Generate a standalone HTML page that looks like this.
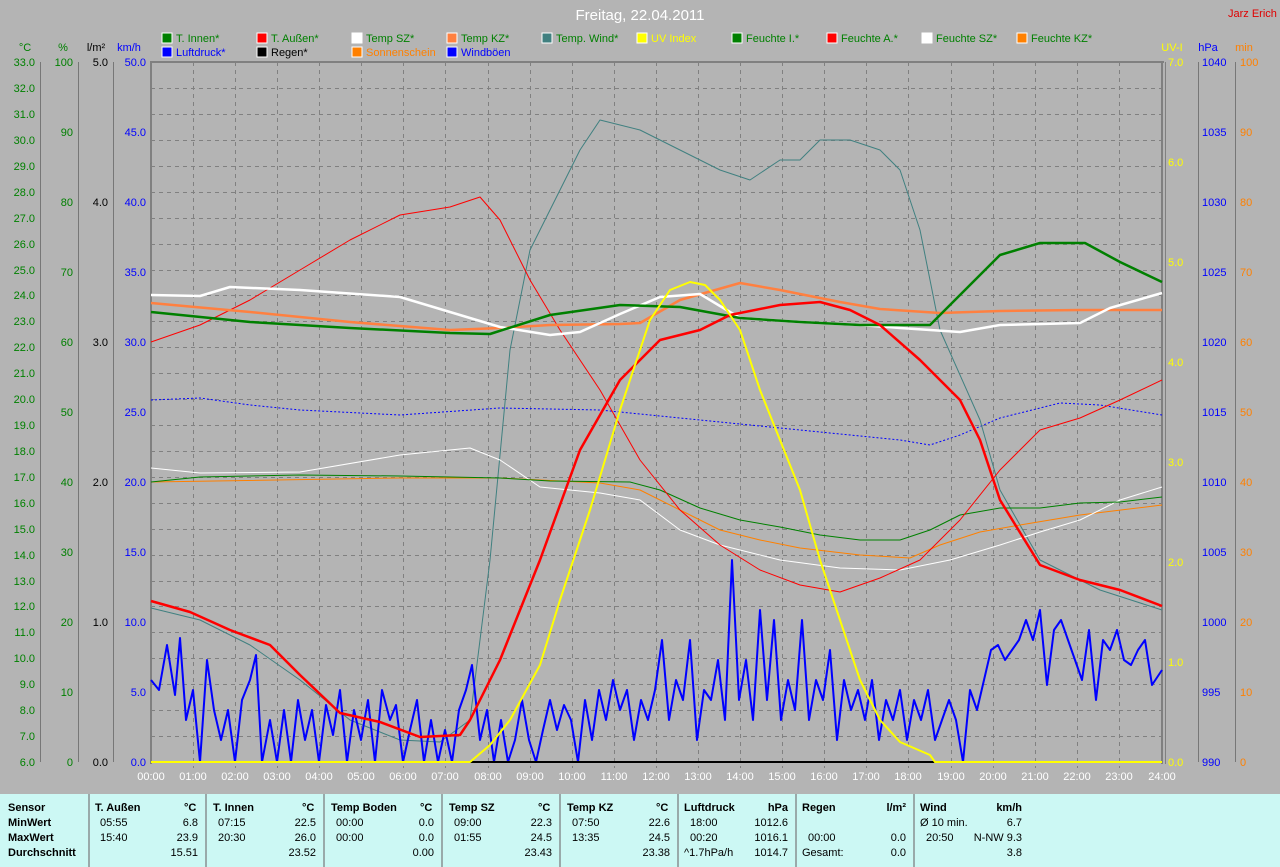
<!DOCTYPE html>
<html><head><meta charset="utf-8"><style>
html,body{margin:0;padding:0;background:#b4b4b4;width:1280px;height:867px;overflow:hidden;font-family:"Liberation Sans",Arial,sans-serif}
svg{position:absolute;left:0;top:0}
#tbl{position:absolute;left:0;top:794px;width:1280px;height:73px;background:#ccf8f4;font-size:11px;color:#000}
#tbl div{position:absolute;white-space:nowrap}
.b{font-weight:bold}
.sep{position:absolute;top:0;width:2px;height:73px;background:#9aa;}
</style></head><body>
<svg width="1280" height="794" font-family="Liberation Sans, Arial, sans-serif" font-size="11">
<text x="640" y="20" fill="#fff" font-size="15" text-anchor="middle">Freitag, 22.04.2011</text>
<text x="1228" y="17" fill="#e00000" font-size="11">Jarz Erich</text>
<!-- legend -->
<g font-size="11">
<rect x="162" y="33" width="10" height="10" fill="#008000" stroke="#fff"/><text x="176" y="42" fill="#008000">T. Innen*</text>
<rect x="257" y="33" width="10" height="10" fill="#f00" stroke="#fff"/><text x="271" y="42" fill="#008000">T. Außen*</text>
<rect x="352" y="33" width="10" height="10" fill="#fff" stroke="#fff"/><text x="366" y="42" fill="#008000">Temp SZ*</text>
<rect x="447" y="33" width="10" height="10" fill="#ff8040" stroke="#fff"/><text x="461" y="42" fill="#008000">Temp KZ*</text>
<rect x="542" y="33" width="10" height="10" fill="#408080" stroke="#fff"/><text x="556" y="42" fill="#008000">Temp. Wind*</text>
<rect x="637" y="33" width="10" height="10" fill="#ff0" stroke="#fff"/><text x="651" y="42" fill="#ff0">UV Index</text>
<rect x="732" y="33" width="10" height="10" fill="#008000" stroke="#fff"/><text x="746" y="42" fill="#008000">Feuchte I.*</text>
<rect x="827" y="33" width="10" height="10" fill="#f00" stroke="#fff"/><text x="841" y="42" fill="#008000">Feuchte A.*</text>
<rect x="922" y="33" width="10" height="10" fill="#fff" stroke="#fff"/><text x="936" y="42" fill="#008000">Feuchte SZ*</text>
<rect x="1017" y="33" width="10" height="10" fill="#ff8000" stroke="#fff"/><text x="1031" y="42" fill="#008000">Feuchte KZ*</text>
<rect x="162" y="47" width="10" height="10" fill="#00f" stroke="#fff"/><text x="176" y="56" fill="#00f">Luftdruck*</text>
<rect x="257" y="47" width="10" height="10" fill="#000" stroke="#fff"/><text x="271" y="56" fill="#000">Regen*</text>
<rect x="352" y="47" width="10" height="10" fill="#ff8000" stroke="#fff"/><text x="366" y="56" fill="#ff8000">Sonnenschein</text>
<rect x="447" y="47" width="10" height="10" fill="#00f" stroke="#fff"/><text x="461" y="56" fill="#00f">Windböen</text>
</g>
<!-- axis headers -->
<text x="25" y="51" fill="#008000" text-anchor="middle">°C</text>
<text x="63" y="51" fill="#008000" text-anchor="middle">%</text>
<text x="96" y="51" fill="#000" text-anchor="middle">l/m²</text>
<text x="129" y="51" fill="#00f" text-anchor="middle">km/h</text>
<text x="1172" y="51" fill="#ff0" text-anchor="middle">UV-I</text>
<text x="1208" y="51" fill="#00f" text-anchor="middle">hPa</text>
<text x="1244" y="51" fill="#ff8000" text-anchor="middle">min</text>
<!-- axis lines -->
<g stroke="#777" stroke-width="1">
<line x1="40.5" y1="62" x2="40.5" y2="762"/><line x1="78.5" y1="62" x2="78.5" y2="762"/><line x1="113.5" y1="62" x2="113.5" y2="762"/>
<line x1="1198.5" y1="62" x2="1198.5" y2="762"/><line x1="1235.5" y1="62" x2="1235.5" y2="762"/>
</g>
<!-- grid -->
<g stroke="#808080" stroke-dasharray="4,4" stroke-width="1">
<line x1="151" y1="88.5" x2="1162" y2="88.5"/><line x1="151" y1="114.5" x2="1162" y2="114.5"/><line x1="151" y1="140.5" x2="1162" y2="140.5"/><line x1="151" y1="166.5" x2="1162" y2="166.5"/><line x1="151" y1="192.5" x2="1162" y2="192.5"/><line x1="151" y1="218.5" x2="1162" y2="218.5"/><line x1="151" y1="244.5" x2="1162" y2="244.5"/><line x1="151" y1="270.5" x2="1162" y2="270.5"/><line x1="151" y1="295.5" x2="1162" y2="295.5"/><line x1="151" y1="321.5" x2="1162" y2="321.5"/><line x1="151" y1="347.5" x2="1162" y2="347.5"/><line x1="151" y1="373.5" x2="1162" y2="373.5"/><line x1="151" y1="399.5" x2="1162" y2="399.5"/><line x1="151" y1="425.5" x2="1162" y2="425.5"/><line x1="151" y1="451.5" x2="1162" y2="451.5"/><line x1="151" y1="477.5" x2="1162" y2="477.5"/><line x1="151" y1="503.5" x2="1162" y2="503.5"/><line x1="151" y1="529.5" x2="1162" y2="529.5"/><line x1="151" y1="555.5" x2="1162" y2="555.5"/><line x1="151" y1="581.5" x2="1162" y2="581.5"/><line x1="151" y1="606.5" x2="1162" y2="606.5"/><line x1="151" y1="632.5" x2="1162" y2="632.5"/><line x1="151" y1="658.5" x2="1162" y2="658.5"/><line x1="151" y1="684.5" x2="1162" y2="684.5"/><line x1="151" y1="710.5" x2="1162" y2="710.5"/><line x1="151" y1="736.5" x2="1162" y2="736.5"/>
<line x1="193.5" y1="62" x2="193.5" y2="768"/><line x1="235.5" y1="62" x2="235.5" y2="768"/><line x1="277.5" y1="62" x2="277.5" y2="768"/><line x1="319.5" y1="62" x2="319.5" y2="768"/><line x1="361.5" y1="62" x2="361.5" y2="768"/><line x1="403.5" y1="62" x2="403.5" y2="768"/><line x1="445.5" y1="62" x2="445.5" y2="768"/><line x1="488.5" y1="62" x2="488.5" y2="768"/><line x1="530.5" y1="62" x2="530.5" y2="768"/><line x1="572.5" y1="62" x2="572.5" y2="768"/><line x1="614.5" y1="62" x2="614.5" y2="768"/><line x1="656.5" y1="62" x2="656.5" y2="768"/><line x1="698.5" y1="62" x2="698.5" y2="768"/><line x1="740.5" y1="62" x2="740.5" y2="768"/><line x1="782.5" y1="62" x2="782.5" y2="768"/><line x1="824.5" y1="62" x2="824.5" y2="768"/><line x1="866.5" y1="62" x2="866.5" y2="768"/><line x1="908.5" y1="62" x2="908.5" y2="768"/><line x1="951.5" y1="62" x2="951.5" y2="768"/><line x1="993.5" y1="62" x2="993.5" y2="768"/><line x1="1035.5" y1="62" x2="1035.5" y2="768"/><line x1="1077.5" y1="62" x2="1077.5" y2="768"/><line x1="1119.5" y1="62" x2="1119.5" y2="768"/>
</g>
<g stroke="#808080" stroke-width="2"><line x1="150" y1="62" x2="1164" y2="62"/><line x1="151" y1="62" x2="151" y2="764"/><line x1="1162" y1="62" x2="1162" y2="764"/></g>
<line x1="1165.5" y1="62" x2="1165.5" y2="764" stroke="#808080"/>
<!-- left labels -->
<g fill="#008000" text-anchor="end">
<text x="35" y="66">33.0</text><text x="35" y="92">32.0</text><text x="35" y="118">31.0</text><text x="35" y="144">30.0</text><text x="35" y="170">29.0</text><text x="35" y="196">28.0</text><text x="35" y="222">27.0</text><text x="35" y="248">26.0</text><text x="35" y="274">25.0</text><text x="35" y="299">24.0</text><text x="35" y="325">23.0</text><text x="35" y="351">22.0</text><text x="35" y="377">21.0</text><text x="35" y="403">20.0</text><text x="35" y="429">19.0</text><text x="35" y="455">18.0</text><text x="35" y="481">17.0</text><text x="35" y="507">16.0</text><text x="35" y="533">15.0</text><text x="35" y="559">14.0</text><text x="35" y="585">13.0</text><text x="35" y="610">12.0</text><text x="35" y="636">11.0</text><text x="35" y="662">10.0</text><text x="35" y="688">9.0</text><text x="35" y="714">8.0</text><text x="35" y="740">7.0</text><text x="35" y="766">6.0</text>
<text x="73" y="66">100</text><text x="73" y="136">90</text><text x="73" y="206">80</text><text x="73" y="276">70</text><text x="73" y="346">60</text><text x="73" y="416">50</text><text x="73" y="486">40</text><text x="73" y="556">30</text><text x="73" y="626">20</text><text x="73" y="696">10</text><text x="73" y="766">0</text>
</g>
<g fill="#000" text-anchor="end"><text x="108" y="66">5.0</text><text x="108" y="206">4.0</text><text x="108" y="346">3.0</text><text x="108" y="486">2.0</text><text x="108" y="626">1.0</text><text x="108" y="766">0.0</text></g>
<g fill="#00f" text-anchor="end"><text x="146" y="66">50.0</text><text x="146" y="136">45.0</text><text x="146" y="206">40.0</text><text x="146" y="276">35.0</text><text x="146" y="346">30.0</text><text x="146" y="416">25.0</text><text x="146" y="486">20.0</text><text x="146" y="556">15.0</text><text x="146" y="626">10.0</text><text x="146" y="696">5.0</text><text x="146" y="766">0.0</text></g>
<g fill="#ff0"><text x="1168" y="66">7.0</text><text x="1168" y="166">6.0</text><text x="1168" y="266">5.0</text><text x="1168" y="366">4.0</text><text x="1168" y="466">3.0</text><text x="1168" y="566">2.0</text><text x="1168" y="666">1.0</text><text x="1168" y="766">0.0</text></g>
<g fill="#00f"><text x="1202" y="66">1040</text><text x="1202" y="136">1035</text><text x="1202" y="206">1030</text><text x="1202" y="276">1025</text><text x="1202" y="346">1020</text><text x="1202" y="416">1015</text><text x="1202" y="486">1010</text><text x="1202" y="556">1005</text><text x="1202" y="626">1000</text><text x="1202" y="696">995</text><text x="1202" y="766">990</text></g>
<g fill="#ff8000"><text x="1240" y="66">100</text><text x="1240" y="136">90</text><text x="1240" y="206">80</text><text x="1240" y="276">70</text><text x="1240" y="346">60</text><text x="1240" y="416">50</text><text x="1240" y="486">40</text><text x="1240" y="556">30</text><text x="1240" y="626">20</text><text x="1240" y="696">10</text><text x="1240" y="766">0</text></g>
<!-- x labels -->
<g fill="#fff" text-anchor="middle">
<text x="151" y="780">00:00</text><text x="193" y="780">01:00</text><text x="235" y="780">02:00</text><text x="277" y="780">03:00</text><text x="319" y="780">04:00</text><text x="361" y="780">05:00</text><text x="403" y="780">06:00</text><text x="445" y="780">07:00</text><text x="488" y="780">08:00</text><text x="530" y="780">09:00</text><text x="572" y="780">10:00</text><text x="614" y="780">11:00</text><text x="656" y="780">12:00</text><text x="698" y="780">13:00</text><text x="740" y="780">14:00</text><text x="782" y="780">15:00</text><text x="824" y="780">16:00</text><text x="866" y="780">17:00</text><text x="908" y="780">18:00</text><text x="951" y="780">19:00</text><text x="993" y="780">20:00</text><text x="1035" y="780">21:00</text><text x="1077" y="780">22:00</text><text x="1119" y="780">23:00</text><text x="1162" y="780">24:00</text>
</g>
<!-- data -->
<g fill="none" stroke-linejoin="round">
<polyline stroke="#00f" stroke-width="1" stroke-dasharray="2,2" points="151,400 200,398 250,405 300,410 400,415 500,408 600,410 700,420 800,430 900,440 930,445 960,435 1000,418 1060,403 1100,405 1162,415"/>
<polyline stroke="#408080" stroke-width="1" points="151,608 200,620 250,645 300,680 350,720 400,740 440,742 470,720 490,560 510,350 530,250 560,190 580,150 600,120 640,130 680,150 720,170 750,180 780,160 800,160 820,140 850,140 880,150 900,170 920,230 940,330 980,420 1000,490 1040,560 1100,590 1162,610"/>
<polyline stroke="#ff8000" stroke-width="1" points="151,482 400,478 500,478 600,483 640,490 680,510 720,530 760,540 800,548 860,555 910,558 940,545 980,532 1020,525 1080,515 1162,505"/>
<polyline stroke="#fff" stroke-width="1" points="151,468 200,473 300,472 400,455 470,448 500,460 540,487 600,493 640,500 680,530 720,545 780,560 840,568 900,570 950,560 1000,545 1040,532 1080,520 1120,500 1162,487"/>
<polyline stroke="#008000" stroke-width="1" points="151,482 200,477 300,475 400,476 500,478 550,481 630,482 660,490 700,508 740,520 780,527 820,535 860,540 900,540 930,530 960,515 1000,508 1040,508 1080,503 1120,502 1162,497"/>
<polyline stroke="#f00" stroke-width="1" points="151,342 200,325 250,300 300,270 350,240 400,215 450,207 480,197 500,220 530,280 560,330 600,390 640,460 680,510 720,545 760,570 800,585 840,592 880,578 920,560 960,520 1000,470 1040,430 1080,418 1120,400 1162,380"/>
<polyline stroke="#00f" stroke-width="2" points="151,680 159,690 167,645 175,695 180,638 186,720 193,690 200,762 207,660 214,710 221,740 228,710 235,762 242,700 250,680 256,655 262,762 270,720 277,762 284,710 291,762 298,700 305,740 312,710 319,762 326,705 333,735 340,690 347,762 354,710 361,740 368,700 375,762 382,690 390,720 396,705 403,762 410,730 417,700 424,762 431,720 438,762 445,730 452,762 459,710 466,690 472,665 480,740 487,710 494,762 501,720 508,762 515,740 522,700 529,740 536,762 543,730 550,700 557,730 564,705 571,720 578,762 585,700 592,740 599,690 606,720 613,680 620,710 627,690 634,740 641,700 648,720 655,690 662,640 669,720 676,680 683,700 690,640 697,740 704,690 711,700 718,660 725,720 732,560 739,700 746,660 753,720 760,610 767,700 774,620 781,720 788,680 795,710 802,620 809,720 816,680 823,700 830,650 837,740 844,680 851,710 858,690 865,720 872,680 879,740 886,700 893,720 900,690 907,740 914,700 921,720 928,690 935,740 942,720 949,700 956,720 963,762 970,690 977,710 984,680 991,650 998,645 1005,660 1012,650 1019,640 1026,620 1033,640 1040,610 1047,685 1054,630 1061,620 1068,640 1075,660 1082,680 1089,630 1096,700 1103,640 1110,650 1117,630 1124,660 1131,665 1138,650 1145,640 1152,685 1162,670"/>
<polyline stroke="#ff8040" stroke-width="2.5" points="151,303 250,312 350,322 450,330 500,328 550,325 620,324 640,323 680,300 740,283 780,290 840,302 880,309 940,313 1000,311 1080,310 1162,310"/>
<polyline stroke="#fff" stroke-width="2.5" points="151,295 200,296 230,287 300,290 400,297 500,327 550,335 580,332 620,314 660,297 700,294 740,318 800,322 860,325 900,328 960,332 1000,325 1080,323 1110,308 1162,293"/>
<polyline stroke="#008000" stroke-width="2.5" points="151,312 250,322 350,328 450,333 490,334 550,315 620,305 680,307 740,318 800,322 860,325 930,325 960,295 1000,255 1040,243 1085,243 1120,262 1162,282"/>
<polyline stroke="#f00" stroke-width="2.5" points="151,601 190,612 230,630 270,645 300,675 340,713 380,722 420,737 460,735 470,720 500,660 540,560 580,450 620,380 660,340 700,330 730,315 780,305 820,302 850,310 880,325 920,360 960,400 980,440 1000,500 1040,565 1080,580 1120,590 1162,606"/>
<polyline stroke="#000" stroke-width="2" points="470,762 1162,762"/>
<polyline stroke="#ff0" stroke-width="2" points="151,762 470,762 490,745 510,720 540,665 560,600 590,510 620,410 650,320 670,290 690,282 705,285 720,300 740,330 760,390 780,440 800,490 820,560 840,620 860,680 880,720 900,742 930,755 935,762 1162,762"/>
</g>
</svg>
<div id="tbl">
<div class="sep" style="left:88px"></div><div class="sep" style="left:205px"></div><div class="sep" style="left:323px"></div><div class="sep" style="left:441px"></div><div class="sep" style="left:559px"></div><div class="sep" style="left:677px"></div><div class="sep" style="left:795px"></div><div class="sep" style="left:913px"></div>
<div class="b" style="left:8px;top:8px">Sensor</div><div class="b" style="left:8px;top:23px">MinWert</div><div class="b" style="left:8px;top:38px">MaxWert</div><div class="b" style="left:8px;top:53px">Durchschnitt</div>
<div class="b" style="left:95px;top:8px">T. Außen</div><div class="b" style="left:184px;top:8px">°C</div><div style="left:100px;top:23px">05:55</div><div style="right:1082px;top:23px">6.8</div><div style="left:100px;top:38px">15:40</div><div style="right:1082px;top:38px">23.9</div><div style="right:1082px;top:53px">15.51</div>
<div class="b" style="left:213px;top:8px">T. Innen</div><div class="b" style="left:302px;top:8px">°C</div><div style="left:218px;top:23px">07:15</div><div style="right:964px;top:23px">22.5</div><div style="left:218px;top:38px">20:30</div><div style="right:964px;top:38px">26.0</div><div style="right:964px;top:53px">23.52</div>
<div class="b" style="left:331px;top:8px">Temp Boden</div><div class="b" style="left:420px;top:8px">°C</div><div style="left:336px;top:23px">00:00</div><div style="right:846px;top:23px">0.0</div><div style="left:336px;top:38px">00:00</div><div style="right:846px;top:38px">0.0</div><div style="right:846px;top:53px">0.00</div>
<div class="b" style="left:449px;top:8px">Temp SZ</div><div class="b" style="left:538px;top:8px">°C</div><div style="left:454px;top:23px">09:00</div><div style="right:728px;top:23px">22.3</div><div style="left:454px;top:38px">01:55</div><div style="right:728px;top:38px">24.5</div><div style="right:728px;top:53px">23.43</div>
<div class="b" style="left:567px;top:8px">Temp KZ</div><div class="b" style="left:656px;top:8px">°C</div><div style="left:572px;top:23px">07:50</div><div style="right:610px;top:23px">22.6</div><div style="left:572px;top:38px">13:35</div><div style="right:610px;top:38px">24.5</div><div style="right:610px;top:53px">23.38</div>
<div class="b" style="left:684px;top:8px">Luftdruck</div><div class="b" style="right:492px;top:8px">hPa</div><div style="left:690px;top:23px">18:00</div><div style="right:492px;top:23px">1012.6</div><div style="left:690px;top:38px">00:20</div><div style="right:492px;top:38px">1016.1</div><div style="left:684px;top:53px">^1.7hPa/h</div><div style="right:492px;top:53px">1014.7</div>
<div class="b" style="left:802px;top:8px">Regen</div><div class="b" style="right:374px;top:8px">l/m²</div><div style="left:808px;top:38px">00:00</div><div style="right:374px;top:38px">0.0</div><div style="left:802px;top:53px">Gesamt:</div><div style="right:374px;top:53px">0.0</div>
<div class="b" style="left:920px;top:8px">Wind</div><div class="b" style="right:258px;top:8px">km/h</div><div style="left:920px;top:23px">Ø 10 min.</div><div style="right:258px;top:23px">6.7</div><div style="left:926px;top:38px">20:50</div><div style="right:258px;top:38px">N-NW 9.3</div><div style="right:258px;top:53px">3.8</div>
</div>
</body></html>
